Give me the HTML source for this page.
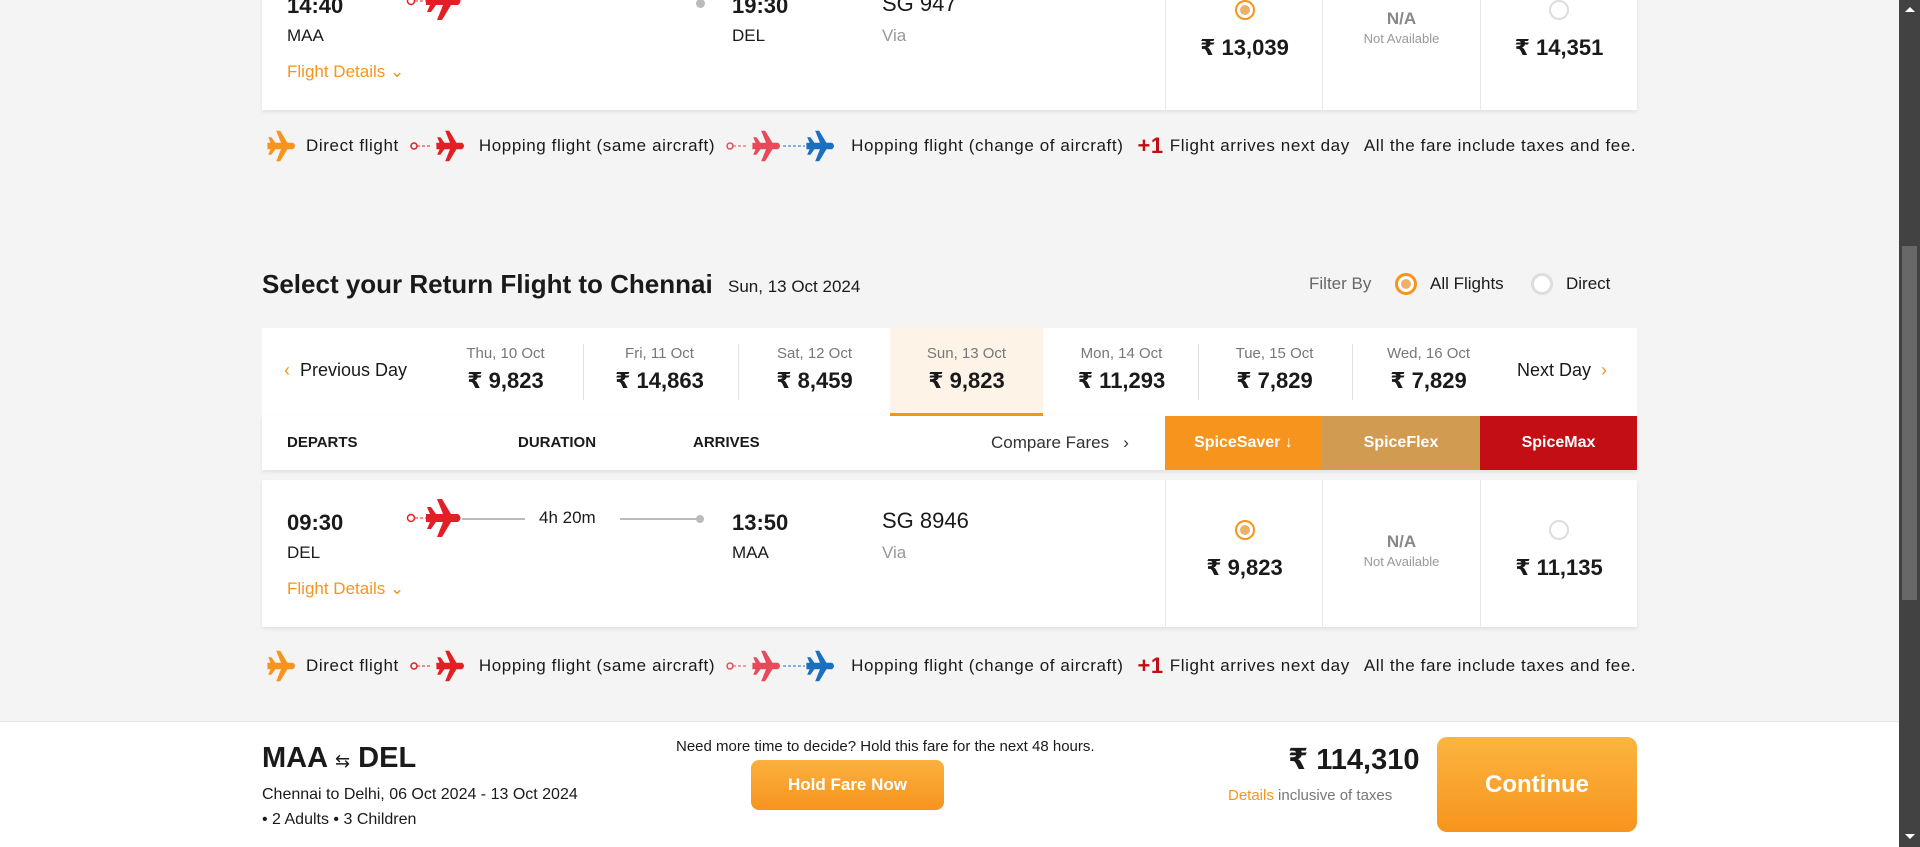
<!DOCTYPE html>
<html><head><meta charset="utf-8"><style>
*{margin:0;padding:0;box-sizing:border-box}
body{width:1920px;height:847px;overflow:hidden;background:#f4f4f4;font-family:"Liberation Sans","DejaVu Sans",sans-serif;color:#1a1a1a;position:relative}
.a{position:absolute;white-space:nowrap}
.card{position:absolute;left:262px;width:1375px;background:#fff;box-shadow:0 2px 4px rgba(0,0,0,.08)}
.t{font-size:22px;font-weight:bold}
.s{font-size:17px}
.g{color:#999}
.or{color:#f7941d}
.col{position:absolute;top:0;bottom:0;border-left:1px solid #e8e8e8;width:158px;text-align:center}
.radio{display:inline-block;width:20px;height:20px;border-radius:50%;border:2px solid #ddd;background:#fff}
.radio.on{border-color:#f7941d;position:relative}
.radio.on:after{content:"";position:absolute;left:3px;top:3px;width:10px;height:10px;border-radius:50%;background:#ecb06d}
.price{font-size:22px;font-weight:bold}
.leg{position:absolute;left:262px;font-size:17px;letter-spacing:0.6px;display:flex;align-items:center;height:32px}
.leg span{margin-right:10px}
.dc{position:absolute;top:0;height:88px;text-align:center;width:153px}
.dc .d{font-size:15px;color:#777;margin-top:17px}
.dc .p{font-size:22px;font-weight:bold;margin-top:6px}
.sep{position:absolute;top:16px;width:1px;height:56px;background:#e0e0e0}
.fh{position:absolute;top:0;height:54px;color:#fff;font-weight:bold;font-size:16px;text-align:center;line-height:54px}
.hd{position:absolute;top:0;line-height:54px;font-size:15px;font-weight:bold}
</style></head><body>

<svg width="0" height="0" style="position:absolute"><defs>
<symbol id="pl" viewBox="0 0 40 40"><path d="M3 16 L7 16 L4 9 L8 9 L13 16 L20 16 L14 1 L19 1 L28 16 L35 16 Q40 20 35 24 L28 24 L19 39 L14 39 L20 24 L13 24 L8 31 L4 31 L7 24 L3 24 Z"/></symbol>
</defs></svg>

<!-- top card -->
<div class="card" style="top:-37px;height:147px">
 <div class="a t" style="left:25px;top:30px">14:40</div>
 <div class="a s" style="left:25px;top:63px">MAA</div>
 <div class="a s or" style="left:25px;top:99px">Flight Details ⌄</div>
 <svg class="a" style="left:143px;top:18px" width="70" height="40"><circle cx="6" cy="20" r="3.5" fill="none" stroke="#e31e24" stroke-width="1.5"/><line x1="10" y1="20" x2="22" y2="20" stroke="#e31e24" stroke-dasharray="3 2"/><use href="#pl" x="18" y="0" width="40" height="40" fill="#e31e24"/></svg>
 <div class="a s" style="left:277px;top:22px">4h 50m</div>
 <div class="a" style="left:434px;top:36px;width:9px;height:9px;border-radius:50%;background:#bbb"></div>
 <div class="a t" style="left:470px;top:30px">19:30</div>
 <div class="a s" style="left:470px;top:63px">DEL</div>
 <div class="a" style="left:620px;top:28px;font-size:22px">SG 947</div>
 <div class="a s g" style="left:620px;top:63px">Via</div>
 <div class="col" style="left:903px"><div style="margin-top:37px"><span class="radio on"></span></div><div class="price" style="margin-top:10px">₹ 13,039</div></div>
 <div class="col" style="left:1060px"><div style="margin-top:46px;font-size:17px;font-weight:bold;color:#888">N/A</div><div style="font-size:13px;color:#999;margin-top:2px">Not Available</div></div>
 <div class="col" style="left:1218px;width:157px"><div style="margin-top:37px"><span class="radio"></span></div><div class="price" style="margin-top:10px">₹ 14,351</div></div>
</div>

<!-- legend 1 -->
<div class="leg" style="top:130px">
 <svg width="40" height="32" style="margin-right:4px"><use href="#pl" x="0" y="0" width="38" height="32" fill="#f7941d"/></svg><span>Direct flight</span>
 <svg width="64" height="32" style="margin-right:6px"><circle cx="5" cy="16" r="3" fill="none" stroke="#e31e24" stroke-width="1.5"/><line x1="8" y1="16" x2="22" y2="16" stroke="#e31e24" stroke-dasharray="3 2"/><use href="#pl" x="22" y="0" width="38" height="32" fill="#e31e24"/></svg><span>Hopping flight (same aircraft)</span>
 <svg width="120" height="32" style="margin-right:6px"><circle cx="5" cy="16" r="3" fill="none" stroke="#e84a5a" stroke-width="1.5"/><line x1="8" y1="16" x2="22" y2="16" stroke="#e84a5a" stroke-dasharray="3 2"/><use href="#pl" x="22" y="0" width="38" height="32" fill="#e84a5a"/><line x1="58" y1="16" x2="80" y2="16" stroke="#1a6fc0" stroke-dasharray="3 2"/><use href="#pl" x="76" y="0" width="38" height="32" fill="#1a6fc0"/></svg><span>Hopping flight (change of aircraft)</span>
 <b style="color:#c20e14;font-size:22px;margin:0 6px 0 4px">+1</b><span style="margin-right:14px">Flight arrives next day</span><span>All the fare include taxes and fee.</span>
</div>

<!-- title -->
<div class="a" style="left:262px;top:269px;font-size:26px;font-weight:bold">Select your Return Flight to Chennai</div>
<div class="a" style="left:728px;top:277px;font-size:17px">Sun, 13 Oct 2024</div>
<div class="a" style="left:1309px;top:274px;font-size:17px;color:#666">Filter By</div>
<div class="a" style="left:1395px;top:273px"><span class="radio on" style="width:22px;height:22px;border-width:3px"></span></div>
<div class="a" style="left:1430px;top:274px;font-size:17px">All Flights</div>
<div class="a" style="left:1531px;top:273px"><span class="radio" style="width:22px;height:22px;border-width:3px"></span></div>
<div class="a" style="left:1566px;top:274px;font-size:17px">Direct</div>

<!-- date strip -->
<div class="card" style="top:328px;height:88px;box-shadow:none">
 <div class="a" style="left:22px;top:32px;font-size:18px"><span class="or">‹</span>&nbsp; Previous Day</div>
 <div class="dc" style="left:167px"><div class="d">Thu, 10 Oct</div><div class="p">₹ 9,823</div></div>
 <div class="sep" style="left:321px"></div>
 <div class="dc" style="left:321px"><div class="d">Fri, 11 Oct</div><div class="p">₹ 14,863</div></div>
 <div class="sep" style="left:476px"></div>
 <div class="dc" style="left:476px"><div class="d">Sat, 12 Oct</div><div class="p">₹ 8,459</div></div>
 <div class="dc" style="left:628px;background:#fdf3e7;border-bottom:3px solid #f7941d"><div class="d">Sun, 13 Oct</div><div class="p">₹ 9,823</div></div>
 <div class="dc" style="left:783px"><div class="d">Mon, 14 Oct</div><div class="p">₹ 11,293</div></div>
 <div class="sep" style="left:936px"></div>
 <div class="dc" style="left:936px"><div class="d">Tue, 15 Oct</div><div class="p">₹ 7,829</div></div>
 <div class="sep" style="left:1090px"></div>
 <div class="dc" style="left:1090px"><div class="d">Wed, 16 Oct</div><div class="p">₹ 7,829</div></div>
 <div class="a" style="left:1255px;top:32px;font-size:18px">Next Day &nbsp;<span class="or">›</span></div>
</div>

<!-- header row -->
<div class="card" style="top:416px;height:54px">
 <div class="hd" style="left:25px">DEPARTS</div>
 <div class="hd" style="left:256px">DURATION</div>
 <div class="hd" style="left:431px">ARRIVES</div>
 <div class="a" style="left:729px;line-height:54px;font-size:17px;color:#333">Compare Fares &nbsp;&nbsp;›</div>
 <div class="fh" style="left:903px;width:157px;background:#f7941d">SpiceSaver ↓</div>
 <div class="fh" style="left:1060px;width:158px;background:#d19b52">SpiceFlex</div>
 <div class="fh" style="left:1218px;width:157px;background:#c20e14">SpiceMax</div>
</div>

<!-- flight card -->
<div class="card" style="top:480px;height:147px">
 <div class="a t" style="left:25px;top:30px">09:30</div>
 <div class="a s" style="left:25px;top:63px">DEL</div>
 <div class="a s or" style="left:25px;top:99px">Flight Details ⌄</div>
 <svg class="a" style="left:143px;top:18px" width="70" height="40"><circle cx="6" cy="20" r="3.5" fill="none" stroke="#e31e24" stroke-width="1.5"/><line x1="10" y1="20" x2="22" y2="20" stroke="#e31e24" stroke-dasharray="3 2"/><use href="#pl" x="18" y="0" width="40" height="40" fill="#e31e24"/></svg>
 <div class="a" style="left:200px;top:38px;width:63px;height:2px;background:#bbb"></div>
 <div class="a s" style="left:277px;top:28px;font-size:17px">4h 20m</div>
 <div class="a" style="left:358px;top:38px;width:80px;height:2px;background:#bbb"></div>
 <div class="a" style="left:434px;top:35px;width:8px;height:8px;border-radius:50%;background:#bbb"></div>
 <div class="a t" style="left:470px;top:30px">13:50</div>
 <div class="a s" style="left:470px;top:63px">MAA</div>
 <div class="a" style="left:620px;top:28px;font-size:22px">SG 8946</div>
 <div class="a s g" style="left:620px;top:63px">Via</div>
 <div class="col" style="left:903px"><div style="margin-top:40px"><span class="radio on"></span></div><div class="price" style="margin-top:10px">₹ 9,823</div></div>
 <div class="col" style="left:1060px"><div style="margin-top:52px;font-size:17px;font-weight:bold;color:#888">N/A</div><div style="font-size:13px;color:#999;margin-top:2px">Not Available</div></div>
 <div class="col" style="left:1218px;width:157px"><div style="margin-top:40px"><span class="radio"></span></div><div class="price" style="margin-top:10px">₹ 11,135</div></div>
</div>

<!-- legend 2 -->
<div class="leg" style="top:650px">
 <svg width="40" height="32" style="margin-right:4px"><use href="#pl" x="0" y="0" width="38" height="32" fill="#f7941d"/></svg><span>Direct flight</span>
 <svg width="64" height="32" style="margin-right:6px"><circle cx="5" cy="16" r="3" fill="none" stroke="#e31e24" stroke-width="1.5"/><line x1="8" y1="16" x2="22" y2="16" stroke="#e31e24" stroke-dasharray="3 2"/><use href="#pl" x="22" y="0" width="38" height="32" fill="#e31e24"/></svg><span>Hopping flight (same aircraft)</span>
 <svg width="120" height="32" style="margin-right:6px"><circle cx="5" cy="16" r="3" fill="none" stroke="#e84a5a" stroke-width="1.5"/><line x1="8" y1="16" x2="22" y2="16" stroke="#e84a5a" stroke-dasharray="3 2"/><use href="#pl" x="22" y="0" width="38" height="32" fill="#e84a5a"/><line x1="58" y1="16" x2="80" y2="16" stroke="#1a6fc0" stroke-dasharray="3 2"/><use href="#pl" x="76" y="0" width="38" height="32" fill="#1a6fc0"/></svg><span>Hopping flight (change of aircraft)</span>
 <b style="color:#c20e14;font-size:22px;margin:0 6px 0 4px">+1</b><span style="margin-right:14px">Flight arrives next day</span><span>All the fare include taxes and fee.</span>
</div>

<!-- footer -->
<div class="a" style="left:0;top:721px;width:1899px;height:126px;background:#fff;border-top:1px solid #e6e6e6">
 <div class="a" style="left:262px;top:20px;font-size:29px;font-weight:bold">MAA <span style="font-size:18px;font-weight:normal">⇆</span> DEL</div>
 <div class="a" style="left:262px;top:64px;font-size:16px">Chennai to Delhi, 06 Oct 2024 - 13 Oct 2024</div>
 <div class="a" style="left:262px;top:89px;font-size:16px">• 2 Adults • 3 Children</div>
 <div class="a" style="left:676px;top:16px;font-size:15px">Need more time to decide? Hold this fare for the next 48 hours.</div>
 <div class="a" style="left:751px;top:38px;width:193px;height:50px;border-radius:8px;background:linear-gradient(#fbb040,#f7941d);color:#fff;font-weight:bold;font-size:17px;text-align:center;line-height:50px">Hold Fare Now</div>
 <div class="a" style="left:1288px;top:20px;font-size:29px;font-weight:bold;width:124px;text-align:right">₹ 114,310</div>
 <div class="a" style="left:1228px;top:65px;font-size:15px;color:#777"><span class="or">Details</span> inclusive of taxes</div>
 <div class="a" style="left:1437px;top:15px;width:200px;height:95px;border-radius:10px;background:linear-gradient(#fbb540,#f7941d);color:#fff;font-weight:bold;font-size:24px;text-align:center;line-height:95px">Continue</div>
</div>

<!-- scrollbar -->
<div class="a" style="left:1899px;top:0;width:21px;height:847px;background:#424242">
 <div class="a" style="left:6px;top:7px;width:0;height:0;border-left:5px solid transparent;border-right:5px solid transparent;border-bottom:5px solid #fff"></div>
 <div class="a" style="left:3px;top:246px;width:15px;height:354px;background:#686868"></div>
 <div class="a" style="left:6px;top:834px;width:0;height:0;border-left:5px solid transparent;border-right:5px solid transparent;border-top:5px solid #fff"></div>
</div>
</body></html>
